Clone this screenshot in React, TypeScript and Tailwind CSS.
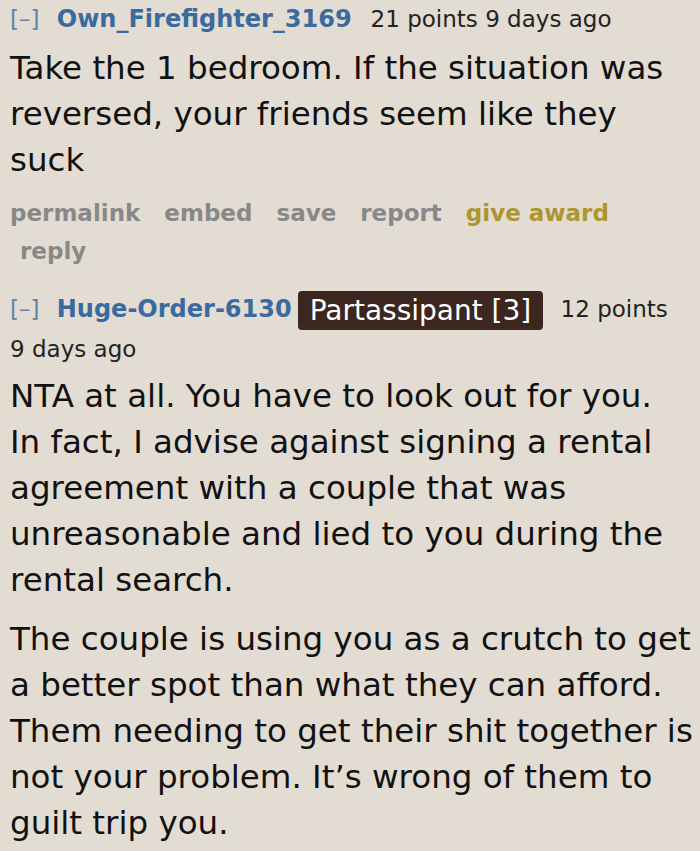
const font = '[font-family:"DejaVu_Sans","Verdana",sans-serif]';
const body = `${font} text-[32.5px] leading-[46px] text-[#111]`;

function Header({ user, extra }: { user: string; extra?: React.ReactNode }) {
  return (
    <div className={`${font} text-[23px] leading-[38px] text-[#222]`}>
      <span className="mr-[10px] text-[#5d83ad]">[–]</span>{' '}
      <span className="text-[24px] font-bold text-[#3a6a9e]">{user}</span>
      {extra}
    </div>
  );
}

export default function App() {
  const actions = ['permalink', 'embed', 'save', 'report'];
  return (
    <div className="min-h-[851px] w-[700px] bg-[#e3dcd2] pl-[10px]">
      <Header user="Own_Firefighter_3169" extra={<span className="ml-[19px]">21 points 9 days ago</span>} />
      <p className={`${body} mt-[7px]`}>
        Take the 1 bedroom. If the situation was reversed, your friends seem like they suck
      </p>
      <ul className={`mt-[11px] flex flex-wrap ${font} text-[23px] font-bold leading-[38px] text-[#888]`}>
        {actions.map((a, i) => (
          <li key={a} className={i === 0 ? 'pr-[14px]' : 'pl-[10px] pr-[14px]'}>
            {a}
          </li>
        ))}
        <li className="pl-[10px] pr-[14px] text-[#ad962f]">give award</li>
        <li className="pl-[10px] pr-[14px]">reply</li>
      </ul>
      <div className="mt-[20px]">
        <Header
          user="Huge-Order-6130"
          extra={
            <>
              <span className="ml-[6px] mr-[10px] inline-block rounded-[4px] bg-[#3b2720] px-[12px] align-middle text-[28px] leading-[39px] text-white">
                Partassipant [3]
              </span>{' '}
              12 points <span className="whitespace-nowrap">9 days ago</span>
            </>
          }
        />
      </div>
      <div className="mt-[5px]">
        <p className={body}>
          NTA at all. You have to look out for you. <span className="whitespace-nowrap">In fact,</span> I advise
          against signing a rental agreement with a couple that was unreasonable and lied to you during the rental
          search.
        </p>
        <p className={`${body} mt-[13px]`}>
          The couple is using you as a crutch to get a better spot than what they can afford. Them needing to get
          their shit together is not your problem. It’s wrong of them to guilt trip you.
        </p>
      </div>
    </div>
  );
}
